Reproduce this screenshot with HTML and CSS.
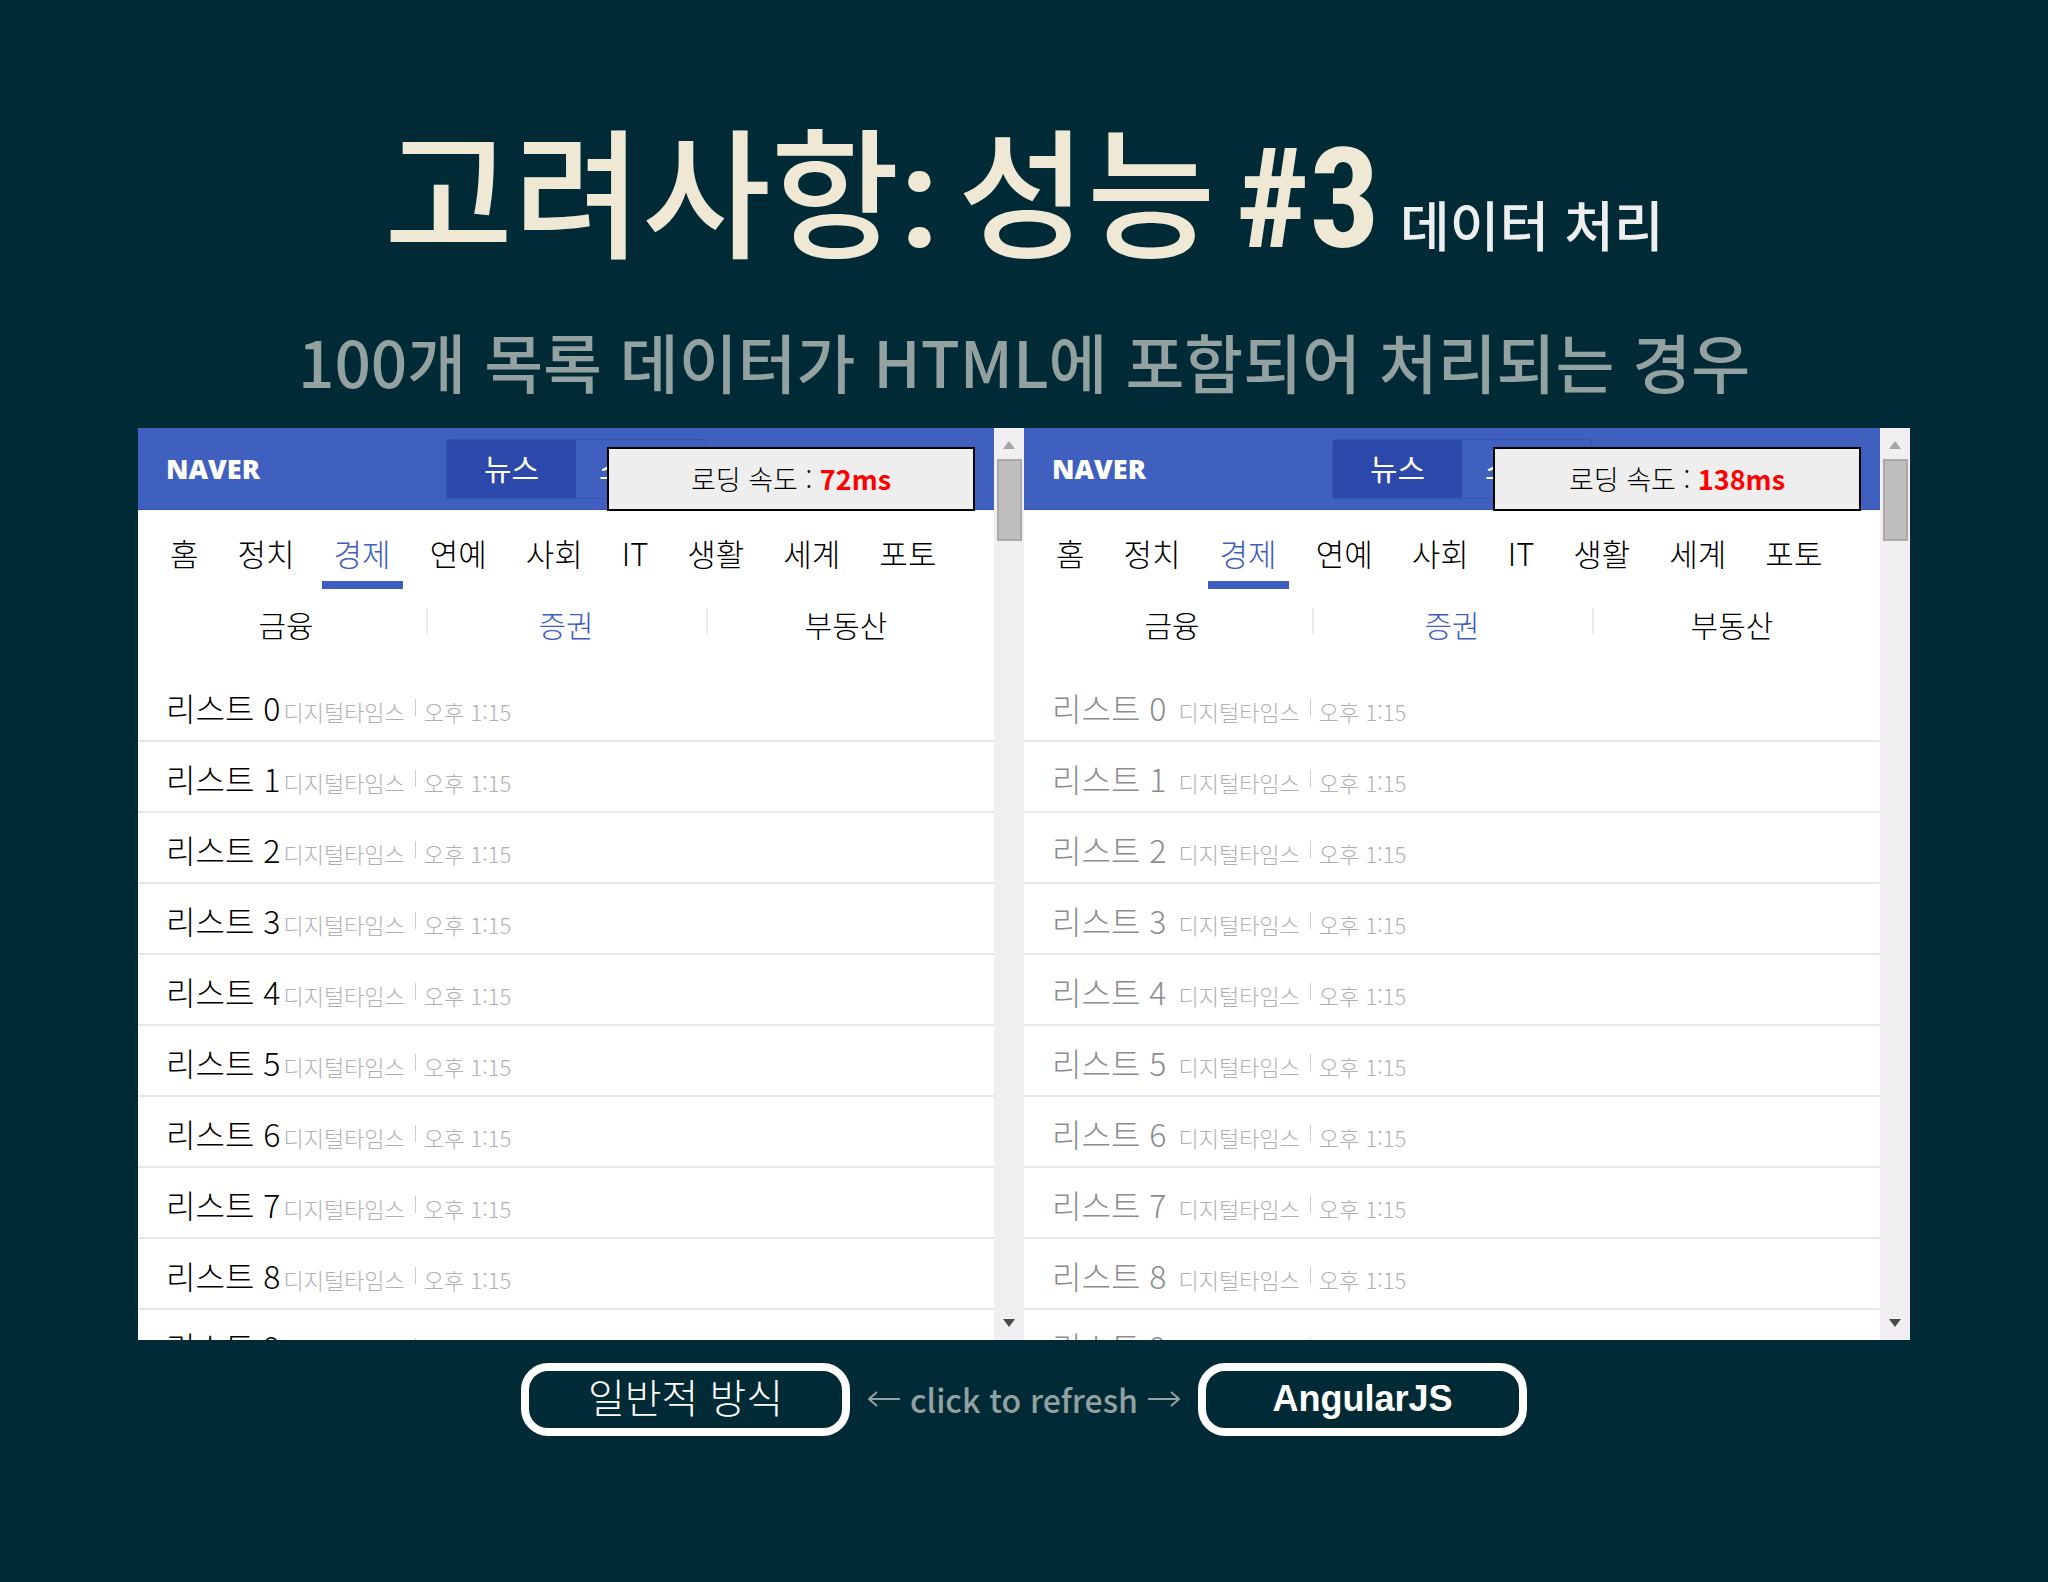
FILE: index.html
```html
<!doctype html>
<html lang="ko">
<head>
    <meta charset="utf-8">
    <title>고려사항: 성능 #3</title>
    <meta name="viewport" content="width=device-width, initial-scale=1.0">
    <link rel="stylesheet" href="styles.css">
</head>
<body>
    <h1>
        <span>고려사항<span class="num">:</span></span>
        <span>성능</span>
        <span class="num">#3</span>
        <small>데이터 처리</small>
    </h1>
    <h2>100개 목록 데이터가 HTML에 포함되어 처리되는 경우</h2>

    <main class="frames">
        <section class="frame">
            <div class="page">
                <header class="top">
                    <a class="logo" href="#">NAVER</a>
                    <div class="switch">
                        <a class="on" href="#">뉴스</a>
                        <a href="#">스포츠</a>
                    </div>
                </header>
                <p class="speed">로딩 속도 : <strong>72ms</strong></p>
                <nav class="menu">
                    <a href="#">홈</a>
                    <a href="#">정치</a>
                    <a class="on" href="#">경제</a>
                    <a href="#">연예</a>
                    <a href="#">사회</a>
                    <a href="#">IT</a>
                    <a href="#">생활</a>
                    <a href="#">세계</a>
                    <a href="#">포토</a>
                </nav>
                <nav class="submenu">
                    <a href="#">금융</a>
                    <a class="on" href="#">증권</a>
                    <a href="#">부동산</a>
                </nav>
                <ul class="list">
                    <li><a href="#">리스트 0</a><span>디지털타임스</span><i></i><span>오후 1:15</span></li>
                    <li><a href="#">리스트 1</a><span>디지털타임스</span><i></i><span>오후 1:15</span></li>
                    <li><a href="#">리스트 2</a><span>디지털타임스</span><i></i><span>오후 1:15</span></li>
                    <li><a href="#">리스트 3</a><span>디지털타임스</span><i></i><span>오후 1:15</span></li>
                    <li><a href="#">리스트 4</a><span>디지털타임스</span><i></i><span>오후 1:15</span></li>
                    <li><a href="#">리스트 5</a><span>디지털타임스</span><i></i><span>오후 1:15</span></li>
                    <li><a href="#">리스트 6</a><span>디지털타임스</span><i></i><span>오후 1:15</span></li>
                    <li><a href="#">리스트 7</a><span>디지털타임스</span><i></i><span>오후 1:15</span></li>
                    <li><a href="#">리스트 8</a><span>디지털타임스</span><i></i><span>오후 1:15</span></li>
                    <li><a href="#">리스트 9</a><span>디지털타임스</span><i></i><span>오후 1:15</span></li>
                </ul>
            </div>
            <div class="scroll">
                <svg class="up" width="12" height="8" viewBox="0 0 12 8"><path d="M6 0l6 8H0z"/></svg>
                <div class="thumb"></div>
                <svg class="down" width="12" height="8" viewBox="0 0 12 8"><path d="M0 0h12L6 8z"/></svg>
            </div>
        </section>

        <section class="frame angular">
            <div class="page">
                <header class="top">
                    <a class="logo" href="#">NAVER</a>
                    <div class="switch">
                        <a class="on" href="#">뉴스</a>
                        <a href="#">스포츠</a>
                    </div>
                </header>
                <p class="speed">로딩 속도 : <strong>138ms</strong></p>
                <nav class="menu">
                    <a href="#">홈</a>
                    <a href="#">정치</a>
                    <a class="on" href="#">경제</a>
                    <a href="#">연예</a>
                    <a href="#">사회</a>
                    <a href="#">IT</a>
                    <a href="#">생활</a>
                    <a href="#">세계</a>
                    <a href="#">포토</a>
                </nav>
                <nav class="submenu">
                    <a href="#">금융</a>
                    <a class="on" href="#">증권</a>
                    <a href="#">부동산</a>
                </nav>
                <ul class="list">
                    <li><a href="#">리스트 0</a><span>디지털타임스</span><i></i><span>오후 1:15</span></li>
                    <li><a href="#">리스트 1</a><span>디지털타임스</span><i></i><span>오후 1:15</span></li>
                    <li><a href="#">리스트 2</a><span>디지털타임스</span><i></i><span>오후 1:15</span></li>
                    <li><a href="#">리스트 3</a><span>디지털타임스</span><i></i><span>오후 1:15</span></li>
                    <li><a href="#">리스트 4</a><span>디지털타임스</span><i></i><span>오후 1:15</span></li>
                    <li><a href="#">리스트 5</a><span>디지털타임스</span><i></i><span>오후 1:15</span></li>
                    <li><a href="#">리스트 6</a><span>디지털타임스</span><i></i><span>오후 1:15</span></li>
                    <li><a href="#">리스트 7</a><span>디지털타임스</span><i></i><span>오후 1:15</span></li>
                    <li><a href="#">리스트 8</a><span>디지털타임스</span><i></i><span>오후 1:15</span></li>
                    <li><a href="#">리스트 9</a><span>디지털타임스</span><i></i><span>오후 1:15</span></li>
                </ul>
            </div>
            <div class="scroll">
                <svg class="up" width="12" height="8" viewBox="0 0 12 8"><path d="M6 0l6 8H0z"/></svg>
                <div class="thumb"></div>
                <svg class="down" width="12" height="8" viewBox="0 0 12 8"><path d="M0 0h12L6 8z"/></svg>
            </div>
        </section>
    </main>

    <footer class="controls">
        <button class="plain" type="button">일반적 방식</button>
        <p>
            <svg width="32" height="16" viewBox="0 0 32 16"><path d="M32 8H2M9 1L1 8l8 7"/></svg>
            click to refresh
            <svg width="32" height="16" viewBox="0 0 32 16"><path d="M0 8h30M23 1l8 7-8 7"/></svg>
        </p>
        <button type="button">AngularJS</button>
    </footer>
</body>
</html>
```

FILE: styles.css
```css
* {
    box-sizing: border-box;
}
body {
    background-color: #002b36;
    color: #93a1a1;
    font-family: "Noto Sans CJK KR", sans-serif;
    min-height: 100vh;
    margin: 0;
    padding: 90px 138px 0;
}
h1, h2, p, ul {
    margin: 0;
    padding: 0;
}
a {
    color: inherit;
    text-decoration: none;
}
h1 {
    display: flex;
    align-items: baseline;
    justify-content: center;
    gap: 20px;
    height: 192px;
    color: #eee8d5;
    font-size: 140px;
    font-weight: 500;
    line-height: 192px;
    white-space: nowrap;
}
h1 .num {
    font-family: "Roboto Condensed", "Open Sans Condensed", Roboto, sans-serif;
    font-weight: 700;
    line-height: 1;
}
h1 small {
    color: #eee;
    font-size: 54px;
    line-height: 1;
}
h2 {
    font-size: 64px;
    font-weight: 500;
    line-height: 96px;
    padding: 30px 0 20px;
    text-align: center;
    white-space: nowrap;
}

/* two pages side by side */
.frames {
    display: flex;
    height: 912px;
}
.frame {
    display: flex;
    flex: 1;
    min-width: 0;
    background-color: #fff;
    overflow: hidden;
}
.page {
    position: relative;
    flex: 1;
    min-width: 0;
    color: #000;
    font-weight: 300;
}
.top {
    display: flex;
    align-items: center;
    justify-content: space-between;
    height: 82px;
    padding: 0 288px 0 28px;
    background-color: #4060c0;
    border-bottom: 1px solid #3453b4;
    color: #fff;
}
.logo {
    font-family: "Open Sans", sans-serif;
    font-size: 27px;
    font-weight: 800;
}
.switch {
    display: flex;
    width: 260px;
    height: 60px;
    border: 1px solid #3856b4;
    border-radius: 3px;
    font-size: 30px;
    font-weight: 400;
    line-height: 54px;
    text-align: center;
}
.switch a {
    flex: 1;
}
.switch .on {
    background-color: #2c48aa;
}
.speed {
    position: absolute;
    top: 19px;
    right: 19px;
    width: 368px;
    height: 64px;
    border: 2px solid #000;
    background-color: #eee;
    font-size: 27px;
    line-height: 60px;
    text-align: center;
}
.speed strong {
    color: #f00;
    font-weight: 700;
}
.menu {
    display: flex;
    gap: 15px;
    padding: 15px 20px 0;
    font-size: 31px;
    line-height: 56px;
}
.menu a {
    padding: 0 12px;
    border-bottom: 8px solid transparent;
}
.menu .on {
    border-color: #3e5dbe;
    color: #3e5dbe;
}
.submenu {
    display: flex;
    padding: 11px 8px 0;
    height: 82px;
    font-size: 30px;
    line-height: 48px;
    text-align: center;
}
.submenu a {
    display: flex;
    flex: 1;
    justify-content: center;
}
.submenu a + a::before {
    content: "";
    width: 2px;
    height: 26px;
    margin: 8px auto 0 0;
    background-color: #ececf0;
}
.submenu a + a::after {
    content: "";
    width: 2px;
    margin-left: auto;
}
.submenu .on {
    color: #3e5dbe;
}
.list {
    list-style: none;
}
.list li {
    display: flex;
    align-items: center;
    height: 71px;
    padding: 3px 28px 0;
    border-bottom: 2px solid #e7e7e9;
}
.list a {
    margin-right: 3px;
    font-size: 32px;
}
.list span {
    padding-top: 8px;
    color: #b0b0b4;
    font-size: 22px;
}
.list i {
    width: 1px;
    height: 17px;
    margin: 0 8px 0 10px;
    background-color: #ccc;
}
.angular .list a {
    margin-right: 12px;
    color: #8c8c90;
}

.scroll {
    display: flex;
    flex-direction: column;
    align-items: center;
    width: 30px;
    padding: 13px 0;
    background-color: #f0eef1;
}
.scroll .up {
    fill: #a3a3a3;
}
.scroll .down {
    margin-top: auto;
    fill: #4a4a4e;
}
.thumb {
    width: 25px;
    height: 82px;
    margin-top: 10px;
    border: 2px solid #aaa8a9;
    background-color: #bfbdbe;
}

.controls {
    display: flex;
    align-items: center;
    justify-content: center;
    gap: 18px;
    padding-top: 23px;
}
.controls button {
    width: 329px;
    height: 73px;
    padding: 0 6px 2px;
    border: 8px solid #fff;
    border-radius: 27px;
    background-color: transparent;
    color: #fff;
    font-family: "Liberation Sans", sans-serif;
    font-size: 36px;
    font-weight: 700;
    cursor: pointer;
}
.controls .plain {
    padding-bottom: 8px;
    font-family: "Noto Sans CJK KR", sans-serif;
    font-size: 40px;
    font-weight: 300;
    line-height: 48px;
}
.controls p {
    display: flex;
    align-items: center;
    gap: 10px;
    padding-bottom: 2px;
    font-size: 32px;
    font-weight: 500;
    line-height: 48px;
}
.controls svg {
    fill: none;
    stroke: #93a1a1;
    stroke-width: 2;
}
```
